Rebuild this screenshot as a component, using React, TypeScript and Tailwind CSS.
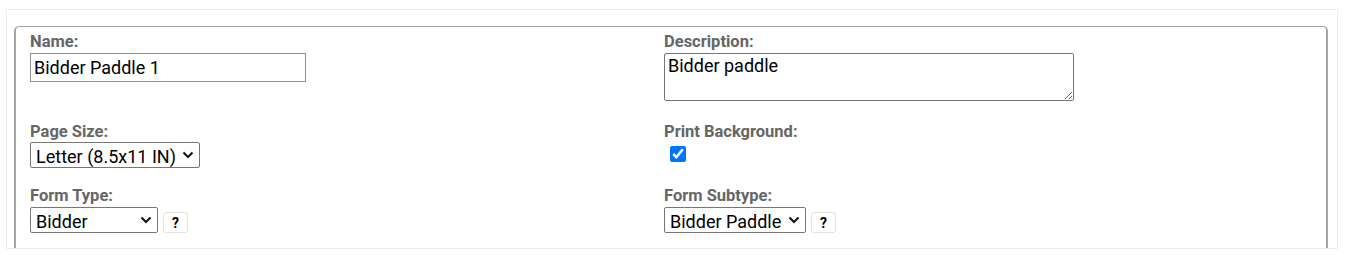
import { useState } from "react";

function HelpButton() {
  return (
    <button
      type="button"
      className="ml-[5px] mt-[5px] h-[21px] w-[25px] rounded-[3px] border border-[#e2e2e2] bg-white text-[14px] font-bold leading-none text-black"
    >
      ?
    </button>
  );
}

function Label({ children }: { children: string }) {
  return <label className="block text-[16.5px] font-bold leading-[20px] text-[#666]">{children}</label>;
}

function Select({ width, options }: { width: string; options: string[] }) {
  return (
    <div className={`relative h-[26px] ${width}`}>
      <select className="h-full w-full appearance-none rounded-[2px] border border-[#767676] bg-white pl-[5px] pr-[20px] text-[18px] text-black">
        {options.map((o) => (
          <option key={o}>{o}</option>
        ))}
      </select>
      <svg
        className="pointer-events-none absolute right-[6px] top-[9px] h-[8px] w-[12px]"
        viewBox="0 0 12 8"
        fill="none"
        stroke="#111"
        strokeWidth="2"
      >
        <path d="M1.5 1.5 6 6l4.5-4.5" />
      </svg>
    </div>
  );
}

export default function App() {
  const [name, setName] = useState("Bidder Paddle 1");
  const [description, setDescription] = useState("Bidder paddle");
  const [printBg, setPrintBg] = useState(true);

  return (
    <div className="h-[263px] bg-white pl-[6px] pr-[12px] pt-[9px] font-['Roboto',sans-serif]">
      <div className="h-[240px] overflow-hidden border border-[#ededed] pl-[7px] pr-[9px] pt-[16px]">
        <div className="h-[260px] rounded-t-[5px] border border-x-2 border-[#a3a3a3] pl-[14px] pt-[5px]">
          <div className="grid grid-cols-[634px_1fr]">
            <div>
              <Label>Name:</Label>
              <input
                value={name}
                onChange={(e) => setName(e.target.value)}
                className="mt-[1px] h-[29px] w-[276px] border border-[#8f8f8f] px-[3px] text-[18px] text-black outline-none"
              />
            </div>
            <div>
              <Label>Description:</Label>
              <textarea
                value={description}
                onChange={(e) => setDescription(e.target.value)}
                className="mt-[1px] block h-[48px] w-[410px] rounded-[2px] border border-[#767676] px-[3px] py-[1px] text-[18px] leading-[22px] text-black outline-none"
              />
            </div>

            <div className="mt-[21px]">
              <Label>Page Size:</Label>
              <Select width="w-[170px]" options={["Letter (8.5x11 IN)", "Legal (8.5x14 IN)"]} />
            </div>
            <div className="mt-[21px]">
              <Label>Print Background:</Label>
              <input
                type="checkbox"
                checked={printBg}
                onChange={(e) => setPrintBg(e.target.checked)}
                className="ml-[6px] mt-[4px] h-[16px] w-[16px] accent-[#0075ff]"
              />
            </div>

            <div className="mt-[17px]">
              <Label>Form Type:</Label>
              <div className="mt-[1px] flex items-start">
                <Select width="w-[128px]" options={["Bidder", "Item"]} />
                <HelpButton />
              </div>
            </div>
            <div className="mt-[17px]">
              <Label>Form Subtype:</Label>
              <div className="mt-[1px] flex items-start">
                <Select width="w-[142px]" options={["Bidder Paddle", "Bidder Card"]} />
                <HelpButton />
              </div>
            </div>
          </div>
        </div>
      </div>
    </div>
  );
}
